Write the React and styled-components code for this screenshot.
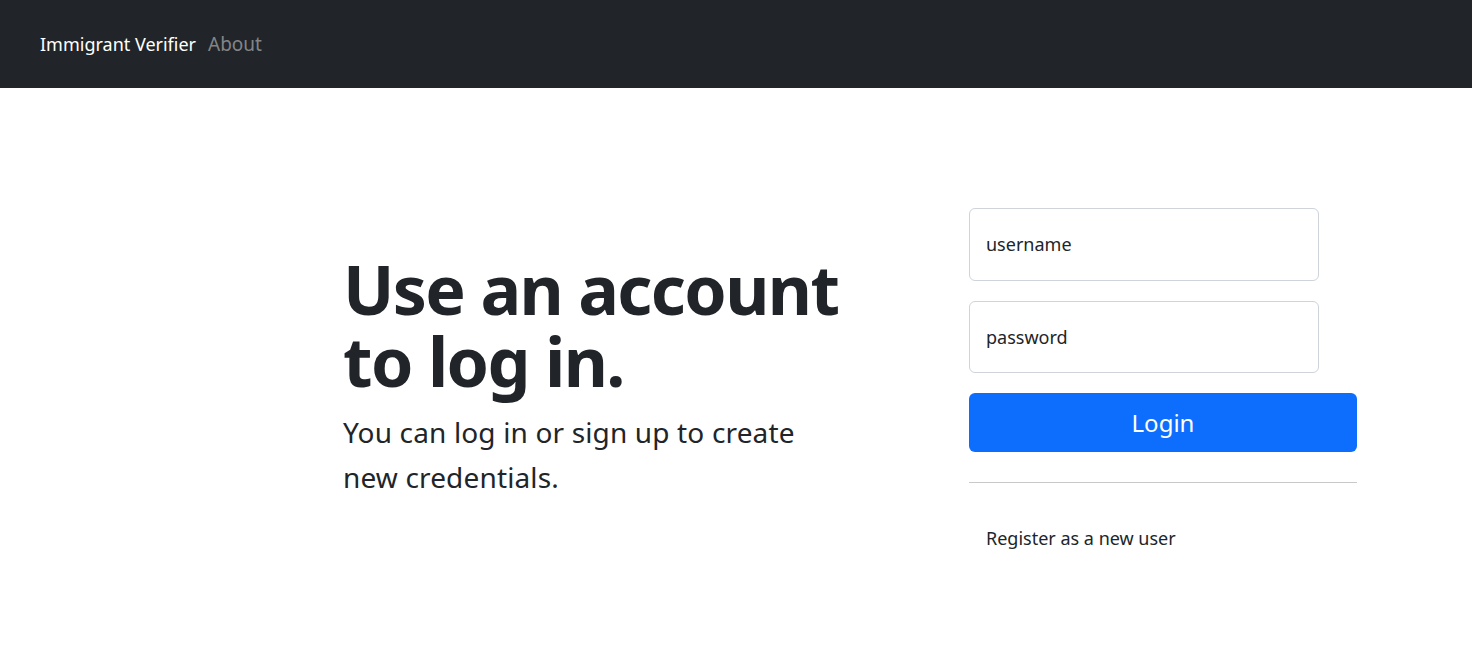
import React, { useState } from 'react';
import styled, { createGlobalStyle } from 'styled-components';

const GlobalStyle = createGlobalStyle`
  * {
    box-sizing: border-box;
  }

  body {
    margin: 0;
    font-family: "Noto Sans", "Open Sans", sans-serif;
    color: #212529;
    background: #fff;
  }
`;

const App = () => {
  const [username, setUsername] = useState('');
  const [password, setPassword] = useState('');

  return (
    <>
      <GlobalStyle />
      <Navbar>
        <Brand href="#">Immigrant Verifier</Brand>
        <NavLink href="#">About</NavLink>
      </Navbar>

      <Main>
        <IntroColumn>
          <Heading>Use an account to log in.</Heading>
          <Lead>You can log in or sign up to create new credentials.</Lead>
        </IntroColumn>

        <FormColumn>
          <Input
            type="text"
            placeholder="username"
            value={username}
            onChange={(e) => setUsername(e.target.value)}
          />
          <Input
            type="password"
            placeholder="password"
            value={password}
            onChange={(e) => setPassword(e.target.value)}
          />
          <LoginButton>Login</LoginButton>
          <Divider />
          <RegisterLink href="#">Register as a new user</RegisterLink>
        </FormColumn>
      </Main>
    </>
  );
};

const Navbar = styled.nav`
  display: flex;
  align-items: center;
  height: 88px;
  padding: 0 40px;
  background-color: #212529;
`;

const Brand = styled.a`
  color: #fff;
  font-size: 18px;
  text-decoration: none;
  margin-right: 12px;
`;

const NavLink = styled.a`
  color: rgba(255, 255, 255, 0.45);
  font-size: 19px;
  text-decoration: none;
`;

const Main = styled.main`
  display: flex;
  align-items: center;
  padding: 120px 0 0 343px;
`;

const IntroColumn = styled.div`
  width: 566px;
  margin-right: 60px;
  padding-bottom: 7px;
`;

const Heading = styled.h1`
  margin: 0;
  font-size: 68px;
  font-weight: 700;
  line-height: 72px;
  letter-spacing: -1.6px;
  width: 540px;
`;

const Lead = styled.p`
  margin: 13px 0 0;
  font-size: 28px;
  line-height: 45px;
  letter-spacing: 0.15px;
  width: 480px;
`;

const FormColumn = styled.div`
  display: flex;
  flex-direction: column;
  width: 388px;
`;

const Input = styled.input`
  width: 350px;
  height: 72.5px;
  padding: 0 16px;
  margin-bottom: 20px;
  border: 1px solid #ced4da;
  border-radius: 6px;
  font-family: inherit;
  font-size: 18px;
  color: #212529;

  &::placeholder {
    color: #212529;
  }

  &:focus {
    outline: 0;
    border-color: #86b7fe;
  }
`;

const LoginButton = styled.button`
  height: 59px;
  border: 0;
  border-radius: 6px;
  background: #0d6efd;
  color: #fff;
  font-family: inherit;
  font-size: 24px;
  cursor: pointer;

  &:hover {
    background: #0b5ed7;
  }
`;

const Divider = styled.hr`
  width: 100%;
  margin: 30px 0 0;
  border: 0;
  border-top: 1px solid #c8c9ca;
`;

const RegisterLink = styled.a`
  margin-top: 42px;
  padding-left: 17px;
  color: #212529;
  font-size: 18px;
  line-height: 27px;
  text-decoration: none;
`;

export default App;
